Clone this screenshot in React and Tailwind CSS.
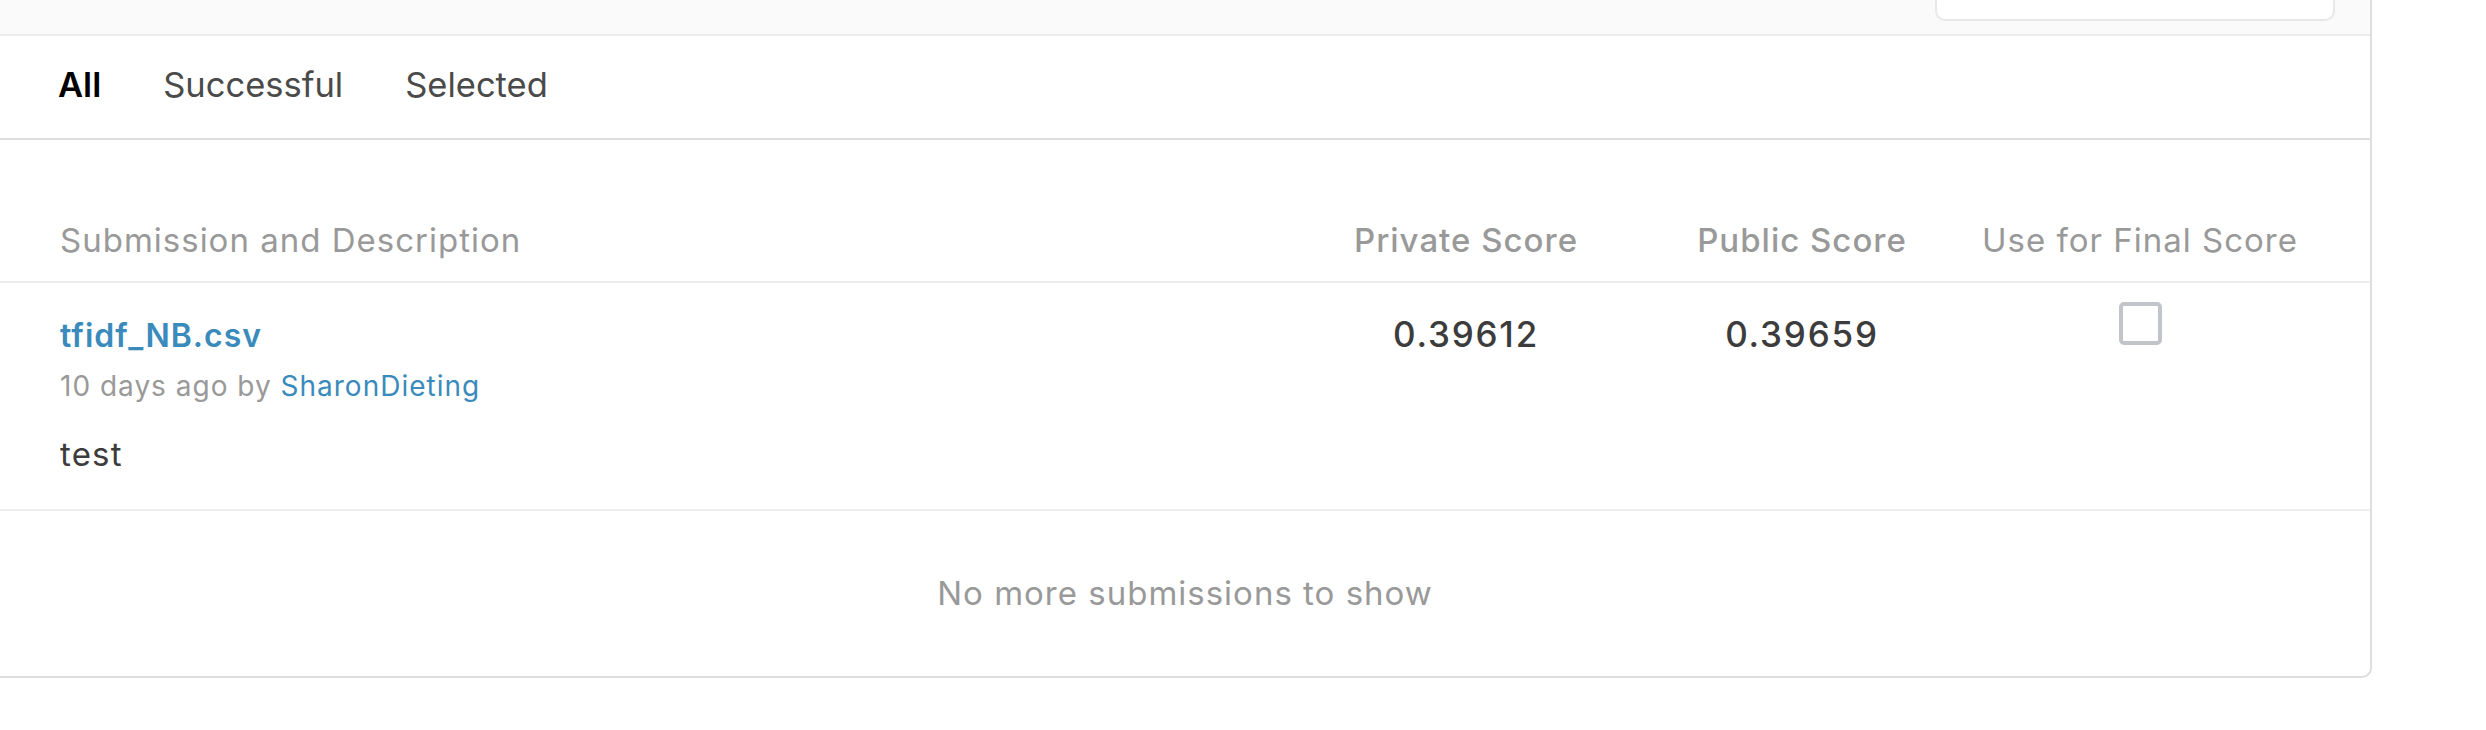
import React from 'react';

const Tab = ({ label, active }) => (
  <span className={active ? 'text-black font-semibold' : 'text-[#4a4a4a]'}>{label}</span>
);

export default function App() {
  return (
    <div className="w-[2486px] h-[730px] bg-white overflow-hidden font-['Inter','Noto_Sans',sans-serif]">
      <div className="w-[2372px] border-r-2 border-b-2 border-[#dedede] rounded-br-[10px] overflow-hidden">
        {/* header strip with search box */}
        <div className="h-[36px] bg-[#fafafa] border-b-2 border-[#ececec] flex items-end justify-end pr-[35px] pb-[13px]">
          <div className="w-[400px] h-[80px] shrink-0 bg-white border-2 border-[#e8e8e8] rounded-[10px]" />
        </div>

        {/* tabs */}
        <div className="flex gap-[62px] pl-[58px] pt-[31px] pb-[35px] text-[34.5px] leading-[36px] border-b-2 border-[#dedede]">
          <Tab label="All" active />
          <Tab label="Successful" />
          <Tab label="Selected" />
        </div>

        {/* table header */}
        <div className="flex px-[60px] pt-[84px] pb-[24px] text-[33px] leading-[33px] tracking-[1px] text-[#999] border-b-2 border-[#ededed]">
          <div className="flex-1">Submission and Description</div>
          <div className="w-[336px] text-center font-medium">Private Score</div>
          <div className="w-[336px] text-center font-medium">Public Score</div>
          <div className="w-[340px] text-center">Use for Final Score</div>
        </div>

        {/* submission row */}
        <div className="flex px-[60px] border-b-2 border-[#efefef]">
          <div className="flex-1 flex flex-col pt-[35px] pb-[35px]">
            <a className="text-[32px] leading-[36px] tracking-[1px] font-semibold text-[#3a8bbb]">tfidf_NB.csv</a>
            <div className="mt-[14px] text-[28px] leading-[36px] tracking-[1px] text-[#999]">
              10 days ago by <a className="text-[#3a8bbb]">SharonDieting</a>
            </div>
            <div className="mt-[30px] text-[33px] leading-[40px] tracking-[1.2px] text-[#3c3c3c]">test</div>
          </div>
          <div className="w-[336px] text-center pt-[31px] text-[35px] leading-[40px] tracking-[1.8px] font-medium text-[#3c3c3c]">0.39612</div>
          <div className="w-[336px] text-center pt-[31px] text-[35px] leading-[40px] tracking-[1.8px] font-medium text-[#3c3c3c]">0.39659</div>
          <div className="w-[340px] flex justify-center pt-[19px]">
            <div className="w-[43px] h-[43px] border-4 border-[#c1c4c8] rounded-[5px]" />
          </div>
        </div>

        {/* footer */}
        <div className="h-[165px] flex items-center justify-center text-[33px] tracking-[1px] text-[#999]">
          No more submissions to show
        </div>
      </div>
    </div>
  );
}
